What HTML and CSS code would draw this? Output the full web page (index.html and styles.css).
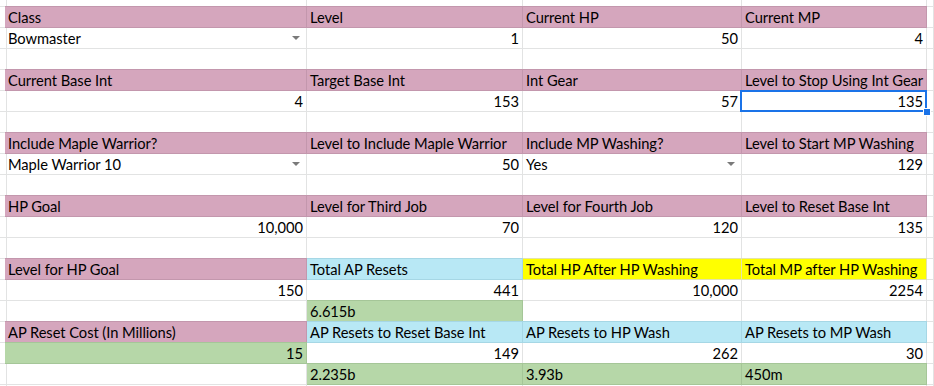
FILE: index.html
```html
<!DOCTYPE html>
<html>
<head>
<meta charset="utf-8">
<link rel="stylesheet" href="styles.css">
</head>
<body>
<div class="sheet">
  <div class="c"></div><div class="c"></div><div class="c"></div><div class="c"></div><div class="c"></div><div class="c"></div><div class="c"></div>

  <div class="c"></div><div class="c pink">Class</div><div class="c pink">Level</div><div class="c pink">Current HP</div><div class="c pink">Current MP</div><div class="c"></div><div class="c"></div>
  <div class="c"></div><div class="c drop">Bowmaster<span class="tri"></span></div><div class="c num">1</div><div class="c num">50</div><div class="c num">4</div><div class="c"></div><div class="c"></div>
  <div class="c"></div><div class="c"></div><div class="c"></div><div class="c"></div><div class="c"></div><div class="c"></div><div class="c"></div>

  <div class="c"></div><div class="c pink">Current Base Int</div><div class="c pink">Target Base Int</div><div class="c pink">Int Gear</div><div class="c pink">Level to Stop Using Int Gear</div><div class="c"></div><div class="c"></div>
  <div class="c"></div><div class="c num">4</div><div class="c num">153</div><div class="c num">57</div><div class="c num sel">135<span class="handle"></span></div><div class="c"></div><div class="c"></div>
  <div class="c"></div><div class="c"></div><div class="c"></div><div class="c"></div><div class="c"></div><div class="c"></div><div class="c"></div>

  <div class="c"></div><div class="c pink">Include Maple Warrior?</div><div class="c pink">Level to Include Maple Warrior</div><div class="c pink">Include MP Washing?</div><div class="c pink">Level to Start MP Washing</div><div class="c"></div><div class="c"></div>
  <div class="c"></div><div class="c drop">Maple Warrior 10<span class="tri"></span></div><div class="c num">50</div><div class="c drop">Yes<span class="tri"></span></div><div class="c num">129</div><div class="c"></div><div class="c"></div>
  <div class="c"></div><div class="c"></div><div class="c"></div><div class="c"></div><div class="c"></div><div class="c"></div><div class="c"></div>

  <div class="c"></div><div class="c pink">HP Goal</div><div class="c pink">Level for Third Job</div><div class="c pink">Level for Fourth Job</div><div class="c pink">Level to Reset Base Int</div><div class="c"></div><div class="c"></div>
  <div class="c"></div><div class="c num">10,000</div><div class="c num">70</div><div class="c num">120</div><div class="c num">135</div><div class="c"></div><div class="c"></div>
  <div class="c"></div><div class="c"></div><div class="c"></div><div class="c"></div><div class="c"></div><div class="c"></div><div class="c"></div>

  <div class="c"></div><div class="c pink">Level for HP Goal</div><div class="c blue">Total AP Resets</div><div class="c yellow">Total HP After HP Washing</div><div class="c yellow">Total MP after HP Washing</div><div class="c"></div><div class="c"></div>
  <div class="c"></div><div class="c num">150</div><div class="c num">441</div><div class="c num">10,000</div><div class="c num">2254</div><div class="c"></div><div class="c"></div>
  <div class="c"></div><div class="c"></div><div class="c green">6.615b</div><div class="c"></div><div class="c"></div><div class="c"></div><div class="c"></div>

  <div class="c"></div><div class="c pink">AP Reset Cost (In Millions)</div><div class="c blue">AP Resets to Reset Base Int</div><div class="c blue">AP Resets to HP Wash</div><div class="c blue">AP Resets to MP Wash</div><div class="c"></div><div class="c"></div>
  <div class="c"></div><div class="c num green">15</div><div class="c num">149</div><div class="c num">262</div><div class="c num">30</div><div class="c"></div><div class="c"></div>
  <div class="c"></div><div class="c"></div><div class="c green">2.235b</div><div class="c green">3.93b</div><div class="c green">450m</div><div class="c"></div><div class="c"></div>

  <div class="c"></div><div class="c"></div><div class="c"></div><div class="c"></div><div class="c"></div><div class="c"></div><div class="c"></div>
</div>
</body>
</html>
```

FILE: styles.css
```css
html, body {
  margin: 0;
  padding: 0;
  background: #ffffff;
  overflow: hidden;
}
.sheet {
  display: grid;
  grid-template-columns: 5px 302px 216px 219px 185px 6px 1fr;
  grid-template-rows: 7px;
  grid-auto-rows: 21px;
  height: 386px;
  overflow: hidden;
  font-family: Lato, "Open Sans", sans-serif;
  font-size: 14.7px;
  letter-spacing: -0.05px;
  line-height: 16px;
  color: #000000;
}
.c {
  box-sizing: border-box;
  border-right: 1px solid #e2e3e3;
  border-bottom: 1px solid #e2e3e3;
  padding: 0 3px 2px 3px;
  display: flex;
  align-items: flex-end;
  white-space: nowrap;
  overflow: hidden;
  position: relative;
}
.num {
  justify-content: flex-end;
}
.pink, .blue, .yellow, .green {
  margin-top: -1px;
  border-top: 1px solid transparent;
  padding-top: 0;
}
.pink {
  background: #d5a6bd;
  border-color: #c397ad;
}
.blue {
  background: #b8e8f5;
  border-color: #a6d7e5;
}
.yellow {
  background: #ffff00;
  border-color: #e3e3a8;
}
.green {
  background: #b6d7a8;
  border-color: #a5c698;
}
.tri {
  position: absolute;
  right: 6px;
  top: 8px;
  width: 0;
  height: 0;
  border-left: 4px solid transparent;
  border-right: 4px solid transparent;
  border-top: 4px solid #7a7a7a;
}
.sel {
  overflow: visible;
  z-index: 2;
}
.sel::before {
  content: "";
  position: absolute;
  left: -2px;
  top: -1px;
  right: -1px;
  bottom: -1px;
  border: 2px solid #1a73e8;
  pointer-events: none;
}
.handle {
  position: absolute;
  right: -4px;
  bottom: -4px;
  width: 6px;
  height: 6px;
  background: #1a73e8;
  border: 1px solid #ffffff;
  box-sizing: content-box;
  margin: -1px;
}
```
